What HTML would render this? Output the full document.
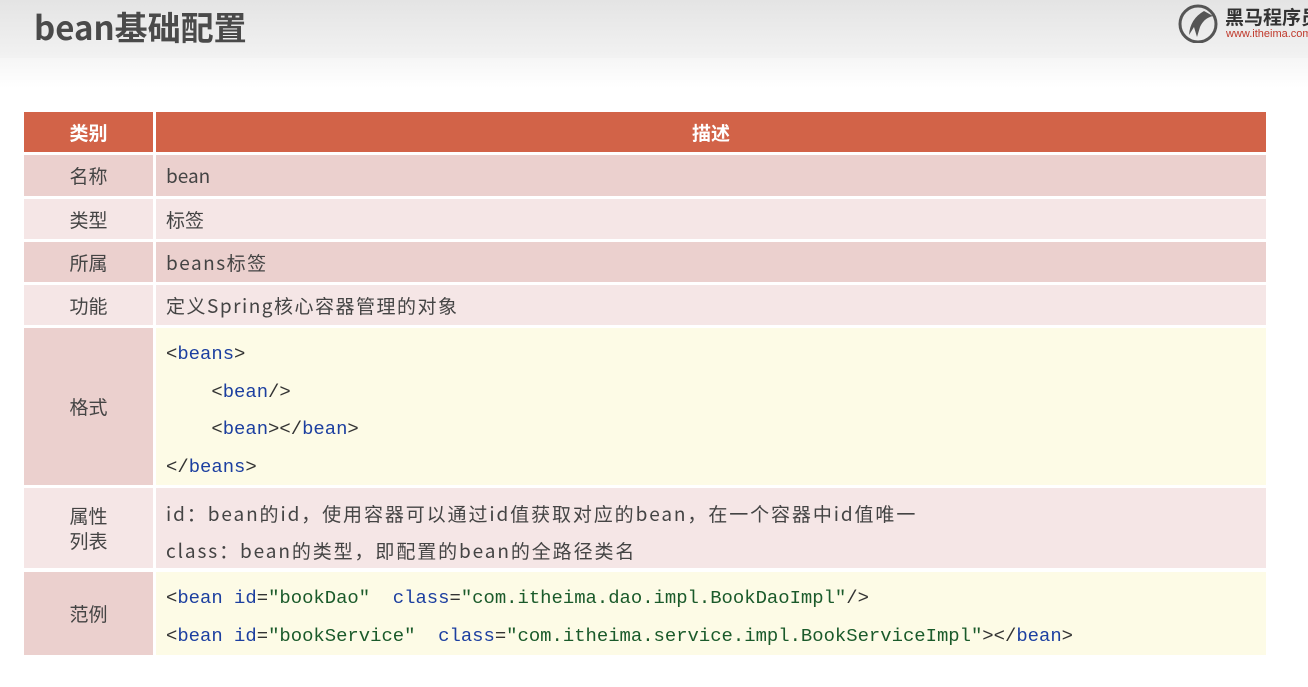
<!DOCTYPE html>
<html><head><meta charset="utf-8"><style>
body{margin:0;width:1308px;height:687px;background:#fff;position:relative;overflow:hidden;font-family:"Noto Sans CJK SC","Liberation Sans",sans-serif;}
.top{position:absolute;left:0;top:0;width:1308px;height:58px;background:linear-gradient(#e4e4e4,#f2f2f2);}
.top2{position:absolute;left:0;top:58px;width:1308px;height:30px;background:linear-gradient(#f6f6f6,#fff);}
h1{position:absolute;left:34px;top:0px;margin:0;font-size:33px;line-height:52px;font-weight:bold;color:#4a4a4a;}
.c{position:absolute;box-sizing:border-box;display:flex;align-items:center;font-size:19px;color:#444;}
.l{left:24px;width:129px;justify-content:center;text-align:center;line-height:25px;}
.r{left:156px;width:1110px;padding-left:10px;}
.h{background:#d26348;color:#fff;font-weight:bold;font-size:19px;}
.p{background:#ebd0ce;}
.q{background:#f5e6e6;}
.y{background:#fdfbe6;}
.code{font-family:"Liberation Mono",monospace;font-size:18.9px;color:#333;display:block;}
.code div{height:37.5px;line-height:37.5px;white-space:nowrap;}
.b{color:#1c3fa0}.g{color:#1a5a2a}
.ls{letter-spacing:1.5px}
</style></head><body>
<div class="top"></div><div class="top2"></div>
<h1>bean基础配置</h1>
<svg style="position:absolute;left:1177px;top:3px" width="44" height="40" viewBox="0 0 44 40"><circle cx="21" cy="21" r="18" fill="none" stroke="#555" stroke-width="3"/><path d="M12 32 Q13 16 27 8 L36 13 Q27 15 23 24 L20 34 L17 24 Z" fill="#555"/></svg>
<div style="position:absolute;left:1225px;top:4px;font-size:19px;font-weight:bold;color:#333;white-space:nowrap;line-height:26px">黑马程序员</div>
<div style="position:absolute;left:1226px;top:28px;font-size:11px;color:#c0392b;white-space:nowrap;font-family:'Liberation Sans',sans-serif">www.itheima.com</div>

<div class="c l h" style="top:112px;height:40px">类别</div>
<div class="c r h" style="top:112px;height:40px;justify-content:center;padding-left:0">描述</div>

<div class="c l p" style="top:155px;height:41px">名称</div>
<div class="c r p" style="top:155px;height:41px">bean</div>
<div class="c l q" style="top:199px;height:40px">类型</div>
<div class="c r q" style="top:199px;height:40px">标签</div>
<div class="c l p" style="top:242px;height:40px">所属</div>
<div class="c r p ls" style="top:242px;height:40px">beans标签</div>
<div class="c l q" style="top:285px;height:40px">功能</div>
<div class="c r q ls" style="top:285px;height:40px">定义Spring核心容器管理的对象</div>

<div class="c l p" style="top:328px;height:157px">格式</div>
<div class="c r y code" style="top:328px;height:157px;padding-top:8px">
<div>&lt;<span class="b">beans</span>&gt;</div>
<div>&nbsp;&nbsp;&nbsp;&nbsp;&lt;<span class="b">bean</span>/&gt;</div>
<div>&nbsp;&nbsp;&nbsp;&nbsp;&lt;<span class="b">bean</span>&gt;&lt;/<span class="b">bean</span>&gt;</div>
<div>&lt;/<span class="b">beans</span>&gt;</div>
</div>

<div class="c l q" style="top:488px;height:80px">属性<br>列表</div>
<div class="c r q" style="top:488px;height:80px;display:block;padding-top:7px;letter-spacing:1.9px">
<div style="height:37px;line-height:37px;white-space:nowrap">id：bean的id，使用容器可以通过id值获取对应的bean，在一个容器中id值唯一</div>
<div style="height:37px;line-height:37px;white-space:nowrap">class：bean的类型，即配置的bean的全路径类名</div>
</div>

<div class="c l p" style="top:572px;height:83px">范例</div>
<div class="c r y code" style="top:572px;height:83px;padding-top:8px">
<div>&lt;<span class="b">bean</span> <span class="b">id</span>=<span class="g">"bookDao"</span>&nbsp;&nbsp;<span class="b">class</span>=<span class="g">"com.itheima.dao.impl.BookDaoImpl"</span>/&gt;</div>
<div>&lt;<span class="b">bean</span> <span class="b">id</span>=<span class="g">"bookService"</span>&nbsp;&nbsp;<span class="b">class</span>=<span class="g">"com.itheima.service.impl.BookServiceImpl"</span>&gt;&lt;/<span class="b">bean</span>&gt;</div>
</div>
</body></html>
